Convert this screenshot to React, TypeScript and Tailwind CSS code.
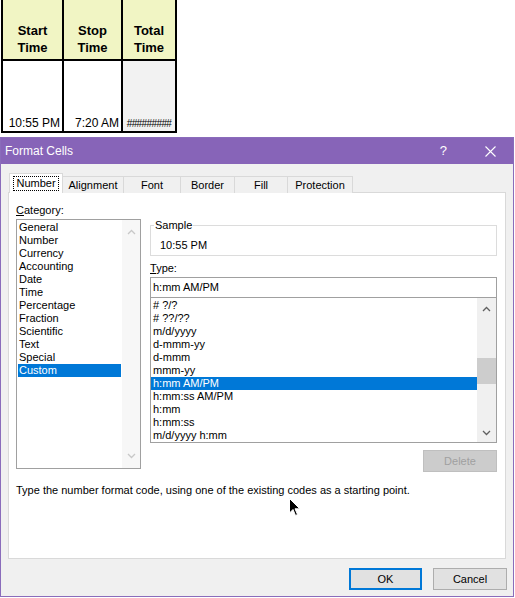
import React from "react";

const categories = [
  "General",
  "Number",
  "Currency",
  "Accounting",
  "Date",
  "Time",
  "Percentage",
  "Fraction",
  "Scientific",
  "Text",
  "Special",
  "Custom",
];

const formats = [
  "# ?/?",
  "# ??/??",
  "m/d/yyyy",
  "d-mmm-yy",
  "d-mmm",
  "mmm-yy",
  "h:mm AM/PM",
  "h:mm:ss AM/PM",
  "h:mm",
  "h:mm:ss",
  "m/d/yyyy h:mm",
];

const tabs = [
  { label: "Alignment", w: "w-[61px]" },
  { label: "Font", w: "w-[57px]" },
  { label: "Border", w: "w-[54px]" },
  { label: "Fill", w: "w-[53px]" },
  { label: "Protection", w: "w-[65px]" },
];

function Chevron({ up, color }: { up?: boolean; color: string }) {
  return (
    <svg width="9" height="6" viewBox="0 0 9 6">
      <path
        d={up ? "M1 5 L4.5 1.5 L8 5" : "M1 1 L4.5 4.5 L8 1"}
        fill="none"
        stroke={color}
        strokeWidth="1.3"
      />
    </svg>
  );
}

function Spreadsheet() {
  return (
    <div className="ml-[1px] flex h-[137px] items-start">
      <div className="flex border-l-2 border-black">
        <div className="flex w-[61px] flex-col">
          <div className="flex h-[61px] items-end justify-center border-r-2 border-b-2 border-black bg-[#f1f5c4] pb-[3px] text-center text-[13px] leading-[17px] font-bold">
            Start
            <br />
            Time
          </div>
          <div className="flex h-[72px] items-end justify-end border-r-2 border-b-2 border-black bg-white pr-[2px] text-[12px] leading-[15px]">
            10:55 PM
          </div>
        </div>
        <div className="flex w-[59px] flex-col">
          <div className="flex h-[61px] items-end justify-center border-r-2 border-b-2 border-black bg-[#f1f5c4] pb-[3px] text-center text-[13px] leading-[17px] font-bold">
            Stop
            <br />
            Time
          </div>
          <div className="flex h-[72px] items-end justify-end border-r-2 border-b-2 border-black bg-white pr-[2px] text-[12px] leading-[15px]">
            7:20 AM
          </div>
        </div>
        <div className="flex w-[54px] flex-col">
          <div className="flex h-[61px] items-end justify-center border-r-2 border-b-2 border-black bg-[#f1f5c4] pb-[3px] text-center text-[13px] leading-[17px] font-bold">
            Total
            <br />
            Time
          </div>
          <div className="flex h-[72px] items-end justify-center border-r-2 border-b-2 border-black bg-[#f2f2f2] text-[10px] leading-[14px] tracking-[-0.6px]">
            #########
          </div>
        </div>
      </div>
    </div>
  );
}

export default function App() {
  return (
    <div className="relative h-[598px] w-[515px] overflow-hidden bg-white font-['Liberation_Sans',Arial,sans-serif] text-[11px] text-black">
      <Spreadsheet />

      <div className="flex h-[460px] w-[514px] flex-col border border-[#8a6cbb] bg-[#f0f0f0]">
        {/* title bar */}
        <div className="flex h-[26px] items-center bg-[#8764b8] text-white">
          <span className="pl-[4px] text-[12px]">Format Cells</span>
          <span className="ml-auto mr-[38px] text-[13px]">?</span>
          <svg width="11" height="11" viewBox="0 0 11 11" className="mr-[17px]">
            <path d="M0.5 0.5 L10.5 10.5 M10.5 0.5 L0.5 10.5" stroke="white" strokeWidth="1.1" />
          </svg>
        </div>

        {/* tabs */}
        <div className="relative z-10 mt-[9px] ml-[8px] flex h-[20px] items-end">
          <div className="flex h-[20px] w-[54px] items-center justify-center border border-b-0 border-[#d9d9d9] bg-white">
            <span className="border border-dotted border-black px-[2px] leading-[13px]">Number</span>
          </div>
          {tabs.map((t) => (
            <div
              key={t.label}
              className={`${t.w} flex h-[17px] items-center justify-center border border-l-0 border-b-0 border-[#d9d9d9] bg-[#f0f0f0]`}
            >
              {t.label}
            </div>
          ))}
        </div>

        {/* panel */}
        <div className="-mt-[1px] ml-[7px] flex h-[367px] w-[498px] flex-col border border-[#d9d9d9] bg-white pl-[7px]">
          <div className="flex gap-[9px]">
            {/* category column */}
            <div className="flex flex-col pt-[11px]">
              <div className="h-[13px] leading-[13px]">
                <span className="underline">C</span>ategory:
              </div>
              <div className="mt-[2px] flex h-[250px] w-[125px] border border-[#a0a0a0] bg-white">
                <div className="flex flex-1 flex-col p-[1px]">
                  {categories.map((c) => (
                    <div
                      key={c}
                      className={`h-[13px] px-[1px] leading-[13px] ${c === "Custom" ? "bg-[#0078d7] text-white" : ""}`}
                    >
                      {c}
                    </div>
                  ))}
                </div>
                <div className="flex w-[18px] flex-col items-center justify-between bg-[#f7f7f7] py-[9px]">
                  <Chevron up color="#c8c8c8" />
                  <Chevron color="#c8c8c8" />
                </div>
              </div>
            </div>

            {/* type column */}
            <div className="flex w-[347px] flex-col pt-[26px]">
              <fieldset className="border border-[#dcdcdc] pb-[3px]">
                <legend className="ml-[3px] px-[1px] leading-[13px]">Sample</legend>
                <div className="mt-[7px] h-[13px] pl-[9px] leading-[13px]">10:55 PM</div>
              </fieldset>
              <div className="mt-[6px] h-[13px] leading-[13px]">
                <span className="underline">T</span>ype:
              </div>
              <div className="mt-[2px] flex h-[21px] items-center border border-[#a0a0a0] pl-[2px]">
                h:mm AM/PM
              </div>
              <div className="flex h-[145px] border border-t-0 border-[#a0a0a0]">
                <div className="flex flex-1 flex-col pt-[1px]">
                  {formats.map((f) => (
                    <div
                      key={f}
                      className={`h-[13px] pl-[2px] leading-[13px] ${f === "h:mm AM/PM" ? "bg-[#0078d7] text-white" : ""}`}
                    >
                      {f}
                    </div>
                  ))}
                </div>
                <div className="flex w-[19px] flex-col items-center bg-[#f0f0f0] pt-[8px] pb-[6px]">
                  <Chevron up color="#606060" />
                  <div className="mt-[46px] h-[26px] w-full bg-[#cdcdcd]" />
                  <div className="mt-auto">
                    <Chevron color="#606060" />
                  </div>
                </div>
              </div>
              <div className="mt-[7px] flex h-[22px] w-[74px] items-center justify-center self-end border border-[#bfbfbf] bg-[#cccccc] text-[#a0a0a0]">
                Delete
              </div>
            </div>
          </div>
          <div className="mt-[12px] h-[13px] leading-[13px]">
            Type the number format code, using one of the existing codes as a starting point.
          </div>
        </div>

        {/* buttons */}
        <div className="mt-[9px] mr-[6px] flex justify-end gap-[11px]">
          <div className="flex h-[22px] w-[73px] items-center justify-center border-2 border-[#0078d7] bg-[#e1e1e1]">
            OK
          </div>
          <div className="flex h-[22px] w-[74px] items-center justify-center border border-[#adadad] bg-[#e1e1e1]">
            Cancel
          </div>
        </div>
      </div>

      {/* mouse pointer */}
      <svg
        className="absolute left-[289px] top-[498px]"
        width="12"
        height="19"
        viewBox="0 0 12 19"
      >
        <path
          d="M0.5 0.5 L0.5 15 L4 11.5 L6.5 17.5 L8.5 16.5 L6 10.8 L10.8 10.8 Z"
          fill="black"
          stroke="white"
          strokeWidth="1"
        />
      </svg>
    </div>
  );
}
